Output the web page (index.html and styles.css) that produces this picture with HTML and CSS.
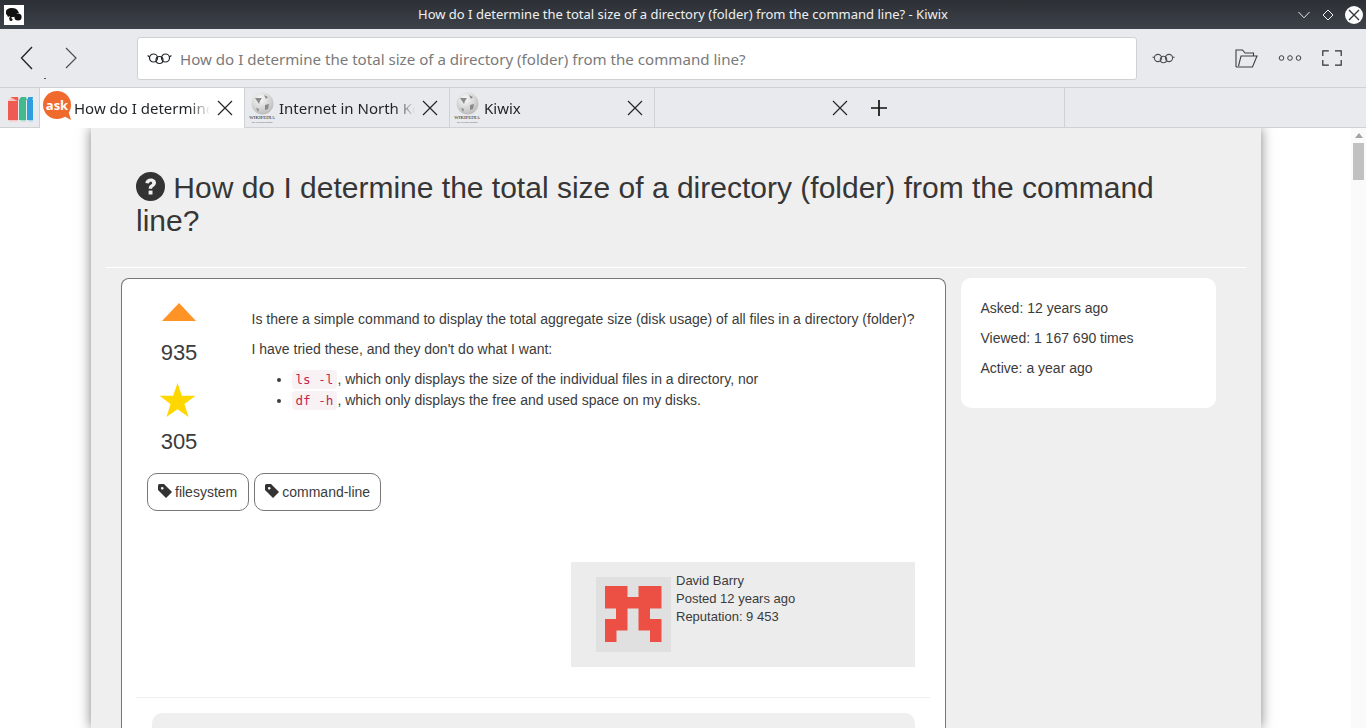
FILE: index.html
```html
<!DOCTYPE html>
<html lang="en">
<head>
<meta charset="utf-8">
<title>How do I determine the total size of a directory (folder) from the command line? - Kiwix</title>
<link rel="stylesheet" href="styles.css">
</head>
<body>
<div class="app">
  <header class="titlebar">
    <div class="app-logo">
      <svg width="20" height="20" viewBox="0 0 20 20"><path d="M2 7c0-3 3-4 6-4 3 0 5 1 6 3l1 2c-2 0-3 1-3 3l-2 1H8l-2 2H5l1-3-2 1-1-2-1-1z" fill="#111"/><circle cx="14" cy="12" r="3.6" fill="#111"/><circle cx="7" cy="14.500" r="1.500" fill="#111"/></svg>
    </div>
    <div class="window-title">How do I determine the total size of a directory (folder) from the command line? - Kiwix</div>
    <div class="window-buttons">
      <svg width="12" height="8" viewBox="0 0 12 8"><path d="M.5 1 6 6.800 11.500 1" fill="none" stroke="#e8eaec"/></svg>
      <svg class="win-diamond" width="12" height="12" viewBox="0 0 12 12"><path d="M6 1 11 6 6 11 1 6z" fill="none" stroke="#f0f1f2"/></svg>
      <span class="win-close"><svg width="18" height="18" viewBox="0 0 18 18"><path d="M4 4 14 14M14 4 4 14" stroke="#31363b" stroke-width="1.400"/></svg></span>
    </div>
  </header>

  <nav class="toolbar">
    <div class="nav-buttons">
      <svg width="13" height="24" viewBox="0 0 13 24"><path d="M12 1 1.500 12 12 23" fill="none" stroke="#232629" stroke-width="1.400"/></svg>
      <svg width="12" height="22" viewBox="0 0 12 22"><path d="M1 1 11 11 1 21" fill="none" stroke="#4a4d51" stroke-width="1.200"/></svg>
      <span class="nav-dot"></span>
    </div>
    <div class="address">
      <svg width="25" height="14" viewBox="0 0 25 14"><g fill="none" stroke="#232629" stroke-width="1.200"><circle cx="12.500" cy="9" r="3.500"/><circle cx="6.500" cy="7" r="4"/><circle cx="18.500" cy="7" r="4"/><path d="M2.600 6 .6 4.500M22.400 6l2-1.500"/></g></svg>
      <span class="address-text">How do I determine the total size of a directory (folder) from the command line?</span>
    </div>
    <div class="tool-icons">
      <svg class="tool-glasses" width="23" height="14" viewBox="0 0 23 14"><g fill="none" stroke="#4d4f52" stroke-width="1.100"><circle cx="11.500" cy="8.500" r="3.200"/><circle cx="6" cy="7" r="3.600"/><circle cx="17" cy="7" r="3.600"/><path d="M2.500 6.200H.4M20.500 6.200h2.100"/></g></svg>
      <svg class="tool-folder" width="23" height="19" viewBox="0 0 23 19"><g fill="none" stroke="#3b3f44" stroke-width="1.100"><path d="M1 18V1h6.500l2.500 3h8.500v3"/><path d="M1 18h16.500L22 7H6L3.500 17"/></g></svg>
      <svg class="tool-dots" width="24" height="8" viewBox="0 0 24 8"><g fill="none" stroke="#3b3f44" stroke-width="1"><circle cx="3.500" cy="4" r="2.300"/><circle cx="12" cy="4" r="2.300"/><circle cx="20.500" cy="4" r="2.300"/></g></svg>
      <svg class="tool-full" width="20" height="16" viewBox="0 0 20 16"><path d="M.8 6V.8h6M13 .8h6.200V6M.8 10v5.200h6M13 15.200h6.200V10" fill="none" stroke="#2c2f33" stroke-width="1.200"/></svg>
    </div>
  </nav>

  <div class="tabbar">
    <div class="library-tab">
      <svg width="26" height="28" viewBox="0 0 26 28"><path d="M1 7 4 3h7l-1 4z" fill="#f7c6c1"/><path d="M4.500 3h6.500l.5 3-1 1L4 3.500z" fill="#ee5b52"/><rect x="1" y="7" width="10" height="19" fill="#ee5b52"/><path d="M1 26h10v1.500H3z" fill="#f7c6c1"/><path d="M12 6l2-3h5l1 3z" fill="#43b98e"/><rect x="12" y="6" width="7" height="20" fill="#43b98e"/><path d="M13 26h6v1.500h-5z" fill="#a9dfca"/><path d="M20 6l1.500-3H26l-.5 3z" fill="#2d9fdc"/><rect x="20" y="6" width="6" height="20" fill="#2d9fdc"/><path d="M21 26h5v1.500h-4z" fill="#a8d4ee"/></svg>
    </div>
    <div class="tab tab-active">
      <svg class="tab-icon ask-icon" width="30" height="30" viewBox="0 0 30 30"><circle cx="14" cy="14" r="14" fill="#ef6a2c"/><path d="M19 24l9 5-3-10z" fill="#ef6a2c"/><text x="14" y="18.500" class="ask-text" text-anchor="middle">ask</text></svg>
      <span class="tab-label">How do I determine the total size of a directory</span>
      <svg class="tab-close" width="16" height="16" viewBox="0 0 16 16"><path d="M1 1 15 15M15 1 1 15" stroke="#232629" stroke-width="1.200"/></svg>
    </div>
    <div class="tab">
      <svg class="tab-icon" width="28" height="32" viewBox="0 0 28 32"><defs><radialGradient id="gl" cx=".4" cy=".3" r=".8"><stop offset="0" stop-color="#fafafa"/><stop offset="1" stop-color="#b5b5b5"/></radialGradient></defs><circle cx="14.500" cy="11.500" r="11" fill="url(#gl)"/><path d="M7 6h7l-2 3-1 3-2-3zM16 3l4 2-2 2zM17 13l4-1-1 5-3 1zM8 16l3 1-1 3z" fill="#8a8a8a"/><text x="14" y="26.500" class="wiki-text" text-anchor="middle">WIKIPEDIA</text><text x="14" y="31" class="wiki-sub" text-anchor="middle">The Free Encyclopedia</text></svg>
      <span class="tab-label">Internet in North Korea and the world</span>
      <svg class="tab-close" width="16" height="16" viewBox="0 0 16 16"><path d="M1 1 15 15M15 1 1 15" stroke="#232629" stroke-width="1.200"/></svg>
    </div>
    <div class="tab">
      <svg class="tab-icon" width="28" height="32" viewBox="0 0 28 32"><circle cx="14.500" cy="11.500" r="11" fill="url(#gl)"/><path d="M7 6h7l-2 3-1 3-2-3zM16 3l4 2-2 2zM17 13l4-1-1 5-3 1zM8 16l3 1-1 3z" fill="#8a8a8a"/><text x="14" y="26.500" class="wiki-text" text-anchor="middle">WIKIPEDIA</text><text x="14" y="31" class="wiki-sub" text-anchor="middle">The Free Encyclopedia</text></svg>
      <span class="tab-label">Kiwix</span>
      <svg class="tab-close" width="16" height="16" viewBox="0 0 16 16"><path d="M1 1 15 15M15 1 1 15" stroke="#232629" stroke-width="1.200"/></svg>
    </div>
    <div class="tab tab-blank">
      <span class="tab-label"></span>
      <svg class="tab-close" width="16" height="16" viewBox="0 0 16 16"><path d="M1 1 15 15M15 1 1 15" stroke="#232629" stroke-width="1.200"/></svg>
    </div>
    <div class="tab-add">
      <svg width="16" height="16" viewBox="0 0 16 16"><path d="M0 8h16M8 0v16" stroke="#111" stroke-width="1.700"/></svg>
    </div>
  </div>

  <div class="viewport">
    <main class="page">
      <div class="panel">
        <h1 class="question-title"><svg class="q-icon" width="29" height="29" viewBox="0 0 29 29"><circle cx="14.500" cy="14.500" r="14.500" fill="#333"/><path d="M9.300 11c.4-3 2.600-4.600 5.400-4.600 3 0 5.300 1.800 5.300 4.400 0 2-1.100 3-2.500 3.900-1 .6-1.300 1-1.300 2H12.700c0-2 .6-3.100 2-4 1-.6 1.500-1 1.500-1.700 0-.8-.7-1.300-1.500-1.300-.9 0-1.500.5-1.800 1.800z" fill="#efefef"/><rect x="12.600" y="18.600" width="3.900" height="3.900" fill="#efefef"/></svg> How do I determine the total size of a directory (folder) from the command line?</h1>
        <hr class="panel-rule">
        <div class="columns">
          <article class="question-card">
            <div class="question-top">
              <div class="votes">
                <svg width="34" height="18" viewBox="0 0 34 18"><path d="M17 0 34 18H0z" fill="#ff9326"/></svg>
                <div class="count count-votes">935</div>
                <svg class="star" width="36" height="34" viewBox="0 0 36 34"><path d="M18 0l4.400 12.800H36L25 21l4 13-11-7.800L7 34l4-13L0 12.800h13.600z" fill="#ffd700"/></svg>
                <div class="count">305</div>
              </div>
              <div class="question-body">
                <p>Is there a simple command to display the total aggregate size (disk usage) of all files in a directory (folder)?</p>
                <p>I have tried these, and they don't do what I want:</p>
                <ul>
                  <li><code>ls -l</code>, which only displays the size of the individual files in a directory, nor</li>
                  <li><code>df -h</code>, which only displays the free and used space on my disks.</li>
                </ul>
              </div>
            </div>
            <div class="tags">
              <span class="tag"><svg width="14" height="14" viewBox="0 0 14 14"><path d="M0 1.500A1.500 1.500 0 0 1 1.500 0H6l8 8-6 6-8-8zM3 4.300a1.300 1.300 0 1 0 0-.1z" fill="#333" fill-rule="evenodd"/></svg>filesystem</span>
              <span class="tag"><svg width="14" height="14" viewBox="0 0 14 14"><path d="M0 1.500A1.500 1.500 0 0 1 1.500 0H6l8 8-6 6-8-8zM3 4.300a1.300 1.300 0 1 0 0-.1z" fill="#333" fill-rule="evenodd"/></svg>command-line</span>
            </div>
            <div class="author-row">
              <div class="author">
                <svg class="avatar" width="75" height="75" viewBox="0 0 75 75"><rect width="75" height="75" fill="#e0e0e0"/><g fill="#ec5044"><rect x="9" y="9" width="22.500" height="11.500"/><rect x="42.500" y="9" width="23" height="11.500"/><rect x="9" y="20" width="56.500" height="11.500"/><rect x="20" y="31" width="11.500" height="11.500"/><rect x="42.500" y="31" width="11.500" height="11.500"/><rect x="9" y="42" width="22.500" height="11.500"/><rect x="42.500" y="42" width="23" height="11.500"/><rect x="9" y="53" width="11.500" height="12"/><rect x="54" y="53" width="11.500" height="12"/></g></svg>
                <div class="author-info">
                  <div>David Barry</div>
                  <div>Posted 12 years ago</div>
                  <div>Reputation: 9 453</div>
                </div>
              </div>
            </div>
            <hr class="card-rule">
            <div class="comment-box"></div>
          </article>
          <aside class="stats">
            <p>Asked: 12 years ago</p>
            <p>Viewed: 1 167 690 times</p>
            <p>Active: a year ago</p>
          </aside>
        </div>
      </div>
    </main>
    <div class="scrollbar">
      <span class="scroll-arrow"></span>
      <span class="scroll-thumb"></span>
    </div>
  </div>
</div>
</body>
</html>
```
FILE: styles.css
```css
* { box-sizing: border-box; }
html, body { margin: 0; height: 100%; overflow: hidden; }
body { font-family: "Liberation Sans", Arial, sans-serif; color: #3b3b3b; background: #fff; }
.app { display: flex; flex-direction: column; height: 728px; }

.titlebar { height: 29px; flex: none; display: flex; align-items: center; background: linear-gradient(#2c3035, #3d424a); color: #eff0f1; }
.app-logo { width: 20px; height: 20px; margin-left: 4px; background: #fff; display: flex; }
.window-title { flex: 1; text-align: center; font: 13px "Noto Sans", sans-serif; padding-left: 45px; white-space: nowrap; margin-top: -1px; }
.window-buttons { display: flex; align-items: center; width: 69px; padding-left: 1px; }
.win-diamond { margin-left: 12px; }
.win-close { width: 18px; height: 18px; border-radius: 50%; background: #fcfcfc; margin-left: 11px; display: flex; }

.toolbar { height: 58px; flex: none; display: flex; align-items: center; background: #e9eaee; }
.nav-buttons { position: relative; width: 137px; display: flex; align-items: center; padding-left: 20px; gap: 32px; }
.nav-dot { position: absolute; left: 44px; top: 32px; width: 2px; height: 1px; background: #555; }
.address { width: 1000px; height: 43px; background: #fff; border: 1px solid #cfd1d4; border-radius: 3px; display: flex; align-items: center; padding-left: 9px; gap: 8px; }
.address-text { font: 15.100px "Noto Sans", sans-serif; color: #7a7a7a; white-space: nowrap; padding-top: 1px; }
.tool-icons { flex: 1; display: flex; align-items: center; padding-left: 15px; }
.tool-folder { margin-left: 60px; }
.tool-dots { margin-left: 20px; }
.tool-full { margin-left: 20px; }

.tabbar { height: 41px; flex: none; display: flex; background: #e9eaee; border-top: 1px solid #cfd1d4; border-bottom: 1px solid #cfd1d4; }
.library-tab { width: 39px; flex: none; display: flex; align-items: center; padding-left: 7px; padding-top: 1px; }
.tab { width: 205px; flex: none; display: flex; align-items: center; padding-left: 3px; border-left: 1px solid #cfd1d4; height: 39px; font: 15px "Noto Sans", sans-serif; color: #232629; }
.tab-active { background: #fff; height: 40px; }
.tab-active .tab-label { margin-left: 1px; }
.tab-icon { flex: none; }
.ask-icon { margin-top: -4px; }
.ask-text { font: 700 13px "Open Sans", sans-serif; fill: #fff; }
.wiki-text { font: 4.800px "Liberation Serif", serif; fill: #222; }
.wiki-sub { font: 2px "Liberation Sans", sans-serif; fill: #555; }
.tab-label { flex: 1; min-width: 0; overflow: hidden; white-space: nowrap; margin-left: 3px; -webkit-mask-image: linear-gradient(to right, #000 85%, transparent 100%); mask-image: linear-gradient(to right, #000 85%, transparent 100%); }
.tab-close { flex: none; margin: 0 11px 0 7px; }
.tab-blank { padding-left: 0; }
.tab-add { width: 206px; flex: none; display: flex; align-items: center; padding-left: 12px; border-right: 1px solid #cfd1d4; height: 39px; }

.viewport { flex: 1; min-height: 0; display: flex; }
.page { flex: 1; min-width: 0; padding-left: 91px; overflow: hidden; }
.panel { width: 1170px; height: 100%; background: #efefef; box-shadow: 0 0 12px rgba(0, 0, 0, .5); position: relative; }
.question-title { margin: 0; padding: 43px 45px 0; font-size: 30px; font-weight: 400; line-height: 33px; color: #363636; }
.q-icon { vertical-align: -3px; }
.panel-rule { margin: 30px 15px 10px; border: 0; border-top: 1px solid #fff; }
.columns { display: flex; padding-left: 30px; gap: 15px; align-items: flex-start; }

.question-card { width: 825px; height: 500px; background: #fff; border: 1px solid #777; border-bottom: 0; border-radius: 8px 8px 0 0; padding: 0 15px 0 14px; flex: none; }
.question-top { display: flex; height: 194px; }
.votes { width: 86px; padding: 24px 0 0; display: flex; flex-direction: column; align-items: center; flex: none; }
.count { font-size: 22px; line-height: 25px; }
.count-votes { margin: 19px 0 18px; }
.star { margin-bottom: 12px; transform: translateX(-1.500px); }
.question-body { flex: 1; font-size: 14px; line-height: 20px; padding: 30px 0 0 29.500px; }
.question-body p { margin: 0 0 10px; }
.question-body ul { margin: 0; padding-left: 40px; }
.question-body li { line-height: 21px; }
code { font: 12.600px "DejaVu Sans Mono", monospace; color: #c7254e; background: #f9f2f4; border-radius: 4px; padding: 2px 4px; }

.tags { display: flex; gap: 5px; padding-left: 11px; }
.tag { height: 38px; display: flex; align-items: center; gap: 3px; padding: 0 10px; border: 1px solid #777; border-radius: 10px; font-size: 14px; }
.tag:first-child { padding-right: 11px; }
.tag svg { margin-top: -3px; }
.author-row { display: flex; justify-content: flex-end; margin-top: 51px; padding-right: 15px; }
.author { width: 344px; height: 105px; background: #ececec; padding: 15px 25px; display: flex; gap: 5px; font-size: 13px; line-height: 18px; }
.avatar { flex: none; }
.author-info { margin-top: -5px; }
.card-rule { margin: 30px 0 15px; border: 0; border-top: 1px solid #eee; }
.comment-box { margin: 0 15px 0 16px; height: 200px; background: #efefef; border-radius: 10px 10px 0 0; }

.stats { width: 255px; height: 130px; background: #fff; border-radius: 10px; padding: 20px 20px 20px 19.500px; font-size: 14px; line-height: 20px; flex: none; }
.stats p { margin: 0 0 10px; }

.scrollbar { width: 15px; flex: none; background: #fafafa; display: flex; flex-direction: column; align-items: center; padding-top: 5px; }
.scroll-arrow { width: 0; height: 0; border-left: 4px solid transparent; border-right: 4px solid transparent; border-bottom: 5px solid #a3a3a3; }
.scroll-thumb { width: 11px; height: 37px; background: #c1c1c1; margin-top: 5px; }
```
